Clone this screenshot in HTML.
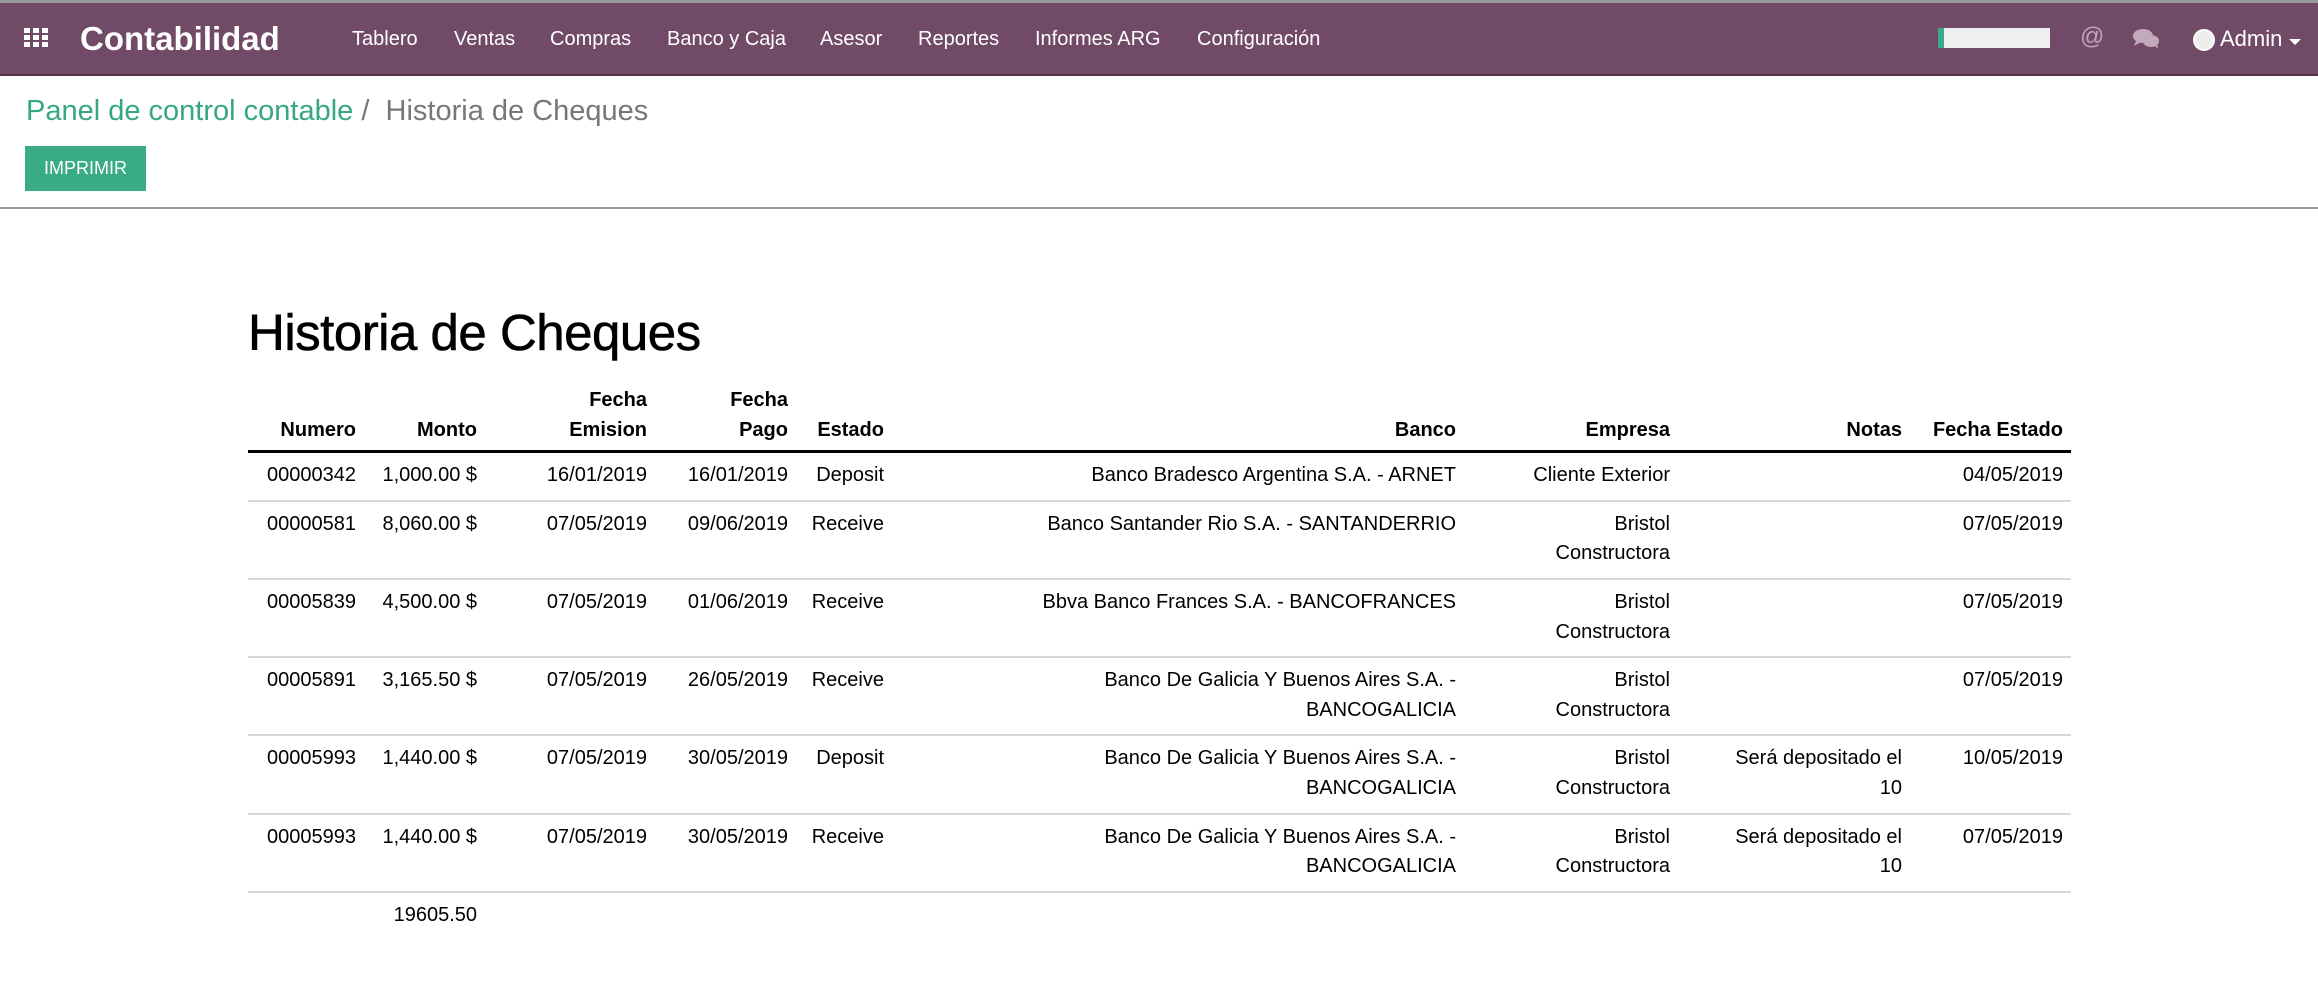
<!DOCTYPE html>
<html><head><meta charset="utf-8">
<style>
*{margin:0;padding:0;box-sizing:border-box}
body{width:2318px;height:994px;background:#fff;font-family:"Liberation Sans",Arial,sans-serif;position:relative;overflow:hidden}
.nav{position:absolute;left:0;top:0;width:2318px;height:76px;background:#714a67;border-top:3px solid #999;border-bottom:2px solid #4f3348;color:#fff}
.nav span{position:absolute;top:25px;font-size:20px;white-space:nowrap}
.brand{font-size:33px!important;font-weight:bold;top:17px!important;left:80px}
.grid{position:absolute;left:24px;top:25px;width:24px;height:20px}
.grid i{position:absolute;width:6px;height:5px;background:#fff}
.bc{position:absolute;left:26px;top:95px;font-size:29px;color:#777;white-space:nowrap}
.bc b{font-weight:normal;color:#35a882}
.btn{position:absolute;left:25px;top:146px;width:121px;height:45px;background:#3aab87;color:#fff;font-size:18px;text-align:center;line-height:45px}
.hr{position:absolute;left:0;top:207px;width:2318px;height:2px;background:#999}
h1{position:absolute;left:248px;top:303px;font-size:51px;font-weight:normal;color:#000;letter-spacing:-0.5px;-webkit-text-stroke:0.6px #000}
table{position:absolute;left:248px;top:386px;width:1823px;border-collapse:collapse;table-layout:fixed;font-size:20px;color:#000}
td,th{text-align:right;padding:8px 8px 9px 4px;line-height:29.6px;white-space:nowrap;vertical-align:top}
th{vertical-align:bottom;padding:0 8px 5px 4px;font-weight:bold}
thead tr{border-bottom:3px solid #000}
tbody tr{border-bottom:2px solid #d8d8d8}
tbody tr.t{border:none}
</style></head><body>
<div class="nav">
 <div class="grid">
  <i style="left:0;top:0"></i><i style="left:9px;top:0"></i><i style="left:18px;top:0"></i>
  <i style="left:0;top:7px"></i><i style="left:9px;top:7px"></i><i style="left:18px;top:7px"></i>
  <i style="left:0;top:14px"></i><i style="left:9px;top:14px"></i><i style="left:18px;top:14px"></i>
 </div>
 <span class="brand">Contabilidad</span>
 <span style="left:352px">Tablero</span>
 <span style="left:454px">Ventas</span>
 <span style="left:550px">Compras</span>
 <span style="left:667px">Banco y Caja</span>
 <span style="left:820px">Asesor</span>
 <span style="left:918px">Reportes</span>
 <span style="left:1035px">Informes ARG</span>
 <span style="left:1197px">Configuración</span>
 <div style="position:absolute;left:1938px;top:25px;width:112px;height:20px;background:#f0f0f0;border-left:6px solid #3aab87"></div>
 <span style="left:2080px;top:20px;font-size:24px;color:#bba5b6">@</span>
 <svg style="position:absolute;left:2132px;top:25px" width="28" height="22" viewBox="0 0 28 22"><ellipse cx="11" cy="8" rx="10" ry="7" fill="#c2aabd"/><path d="M4 13 L2 18 L9 14Z" fill="#c2aabd"/><ellipse cx="19" cy="13" rx="8" ry="6" fill="#c2aabd"/><path d="M22 17 L26 21 L25 15Z" fill="#c2aabd"/></svg>
 <div style="position:absolute;left:2193px;top:26px;width:22px;height:22px;border-radius:50%;background:#eee;border:2px solid #fff"></div>
 <span style="left:2220px;top:23px;font-size:22px">Admin</span>
 <div style="position:absolute;left:2289px;top:36px;border-left:6px solid transparent;border-right:6px solid transparent;border-top:6px solid #fff"></div>
</div>
<div class="bc"><b>Panel de control contable</b> /&nbsp; Historia de Cheques</div>
<div class="btn">IMPRIMIR</div>
<div class="hr"></div>
<h1>Historia de Cheques</h1>
<table>
<colgroup><col style="width:116px"><col style="width:121px"><col style="width:170px"><col style="width:141px"><col style="width:96px"><col style="width:572px"><col style="width:214px"><col style="width:232px"><col style="width:161px"></colgroup>
<thead><tr><th>Numero</th><th>Monto</th><th>Fecha<br>Emision</th><th>Fecha<br>Pago</th><th>Estado</th><th>Banco</th><th>Empresa</th><th>Notas</th><th>Fecha Estado</th></tr></thead>
<tbody>
<tr><td>00000342</td><td>1,000.00 $</td><td>16/01/2019</td><td>16/01/2019</td><td>Deposit</td><td>Banco Bradesco Argentina S.A. - ARNET</td><td>Cliente Exterior</td><td></td><td>04/05/2019</td></tr>
<tr><td>00000581</td><td>8,060.00 $</td><td>07/05/2019</td><td>09/06/2019</td><td>Receive</td><td>Banco Santander Rio S.A. - SANTANDERRIO</td><td>Bristol<br>Constructora</td><td></td><td>07/05/2019</td></tr>
<tr><td>00005839</td><td>4,500.00 $</td><td>07/05/2019</td><td>01/06/2019</td><td>Receive</td><td>Bbva Banco Frances S.A. - BANCOFRANCES</td><td>Bristol<br>Constructora</td><td></td><td>07/05/2019</td></tr>
<tr><td>00005891</td><td>3,165.50 $</td><td>07/05/2019</td><td>26/05/2019</td><td>Receive</td><td>Banco De Galicia Y Buenos Aires S.A. -<br>BANCOGALICIA</td><td>Bristol<br>Constructora</td><td></td><td>07/05/2019</td></tr>
<tr><td>00005993</td><td>1,440.00 $</td><td>07/05/2019</td><td>30/05/2019</td><td>Deposit</td><td>Banco De Galicia Y Buenos Aires S.A. -<br>BANCOGALICIA</td><td>Bristol<br>Constructora</td><td>Será depositado el<br>10</td><td>10/05/2019</td></tr>
<tr><td>00005993</td><td>1,440.00 $</td><td>07/05/2019</td><td>30/05/2019</td><td>Receive</td><td>Banco De Galicia Y Buenos Aires S.A. -<br>BANCOGALICIA</td><td>Bristol<br>Constructora</td><td>Será depositado el<br>10</td><td>07/05/2019</td></tr>
<tr class="t"><td></td><td>19605.50</td><td></td><td></td><td></td><td></td><td></td><td></td><td></td></tr>
</tbody></table>
</body></html>
